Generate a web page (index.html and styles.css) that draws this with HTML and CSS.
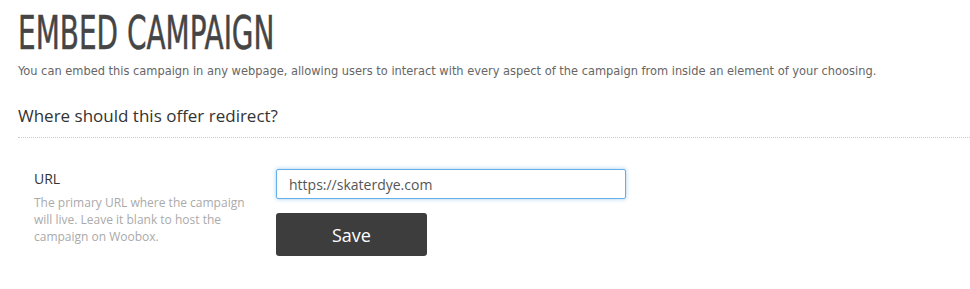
FILE: index.html
```html
<!DOCTYPE html>
<html>
<head>
<meta charset="utf-8">
<link rel="stylesheet" href="styles.css">
</head>
<body>
<div class="page">
  <h1 class="title"><span class="title-text">EMBED CAMPAIGN</span></h1>
  <p class="intro">You can embed this campaign in any webpage, allowing users to interact with every aspect of the campaign from inside an element of your choosing.</p>
  <h2 class="section">Where should this offer redirect?</h2>
  <div class="row">
    <div class="label-col">
      <div class="label">URL</div>
      <div class="help">The primary URL where the campaign will live. Leave it blank to host the campaign on Woobox.</div>
    </div>
    <div class="field-col">
      <input class="input" type="text" value="https://skaterdye.com">
      <button class="btn">Save</button>
    </div>
  </div>
</div>
</body>
</html>
```
FILE: styles.css
```css
html, body { margin: 0; padding: 0; background: #fff; }
.page { padding: 0 0 0 18px; }
.title {
  margin: 0;
  padding-top: 8px;
  font-family: "DejaVu Sans", sans-serif;
  font-stretch: condensed;
  font-weight: normal;
  font-size: 46px;
  line-height: 50px;
  color: #454545;
  white-space: nowrap;
}
.title-text {
  display: inline-block;
  transform: scaleX(0.675);
  transform-origin: left center;
  -webkit-text-stroke: 0.5px #454545;
}
.intro {
  margin: 5px 0 0;
  font-family: "DejaVu Sans", sans-serif;
  font-stretch: condensed;
  font-size: 12.7px;
  line-height: 16px;
  color: #666;
}
.section {
  margin: 25px 0 0;
  padding-bottom: 9px;
  font-family: "Open Sans", sans-serif;
  font-weight: normal;
  font-size: 17px;
  line-height: 24px;
  color: #333;
  border-bottom: 1px dotted #ccc;
}
.row { display: flex; margin-top: 31px; }
.label-col { width: 242px; padding-left: 16px; }
.label {
  font-family: "Open Sans", sans-serif;
  font-size: 14px;
  line-height: 20px;
  color: #333;
}
.help {
  margin-top: 5px;
  font-family: "Open Sans", sans-serif;
  font-size: 12px;
  line-height: 17px;
  color: #aaa;
  width: 215px;
}
.field-col { display: flex; flex-direction: column; align-items: flex-start; }
.input {
  box-sizing: border-box;
  width: 350px;
  height: 30px;
  margin: 0;
  padding: 0 12px;
  font-family: "Open Sans", sans-serif;
  font-size: 14px;
  color: #555;
  border: 1px solid #66afe9;
  border-radius: 2px;
  box-shadow: 0 0 4px rgba(102,175,233,.6);
  outline: none;
}
.btn {
  margin-top: 14px;
  width: 151px;
  height: 43px;
  background: #3d3d3d;
  color: #fff;
  border: none;
  border-radius: 3px;
  font-family: "Open Sans", sans-serif;
  font-size: 18px;
}
```
